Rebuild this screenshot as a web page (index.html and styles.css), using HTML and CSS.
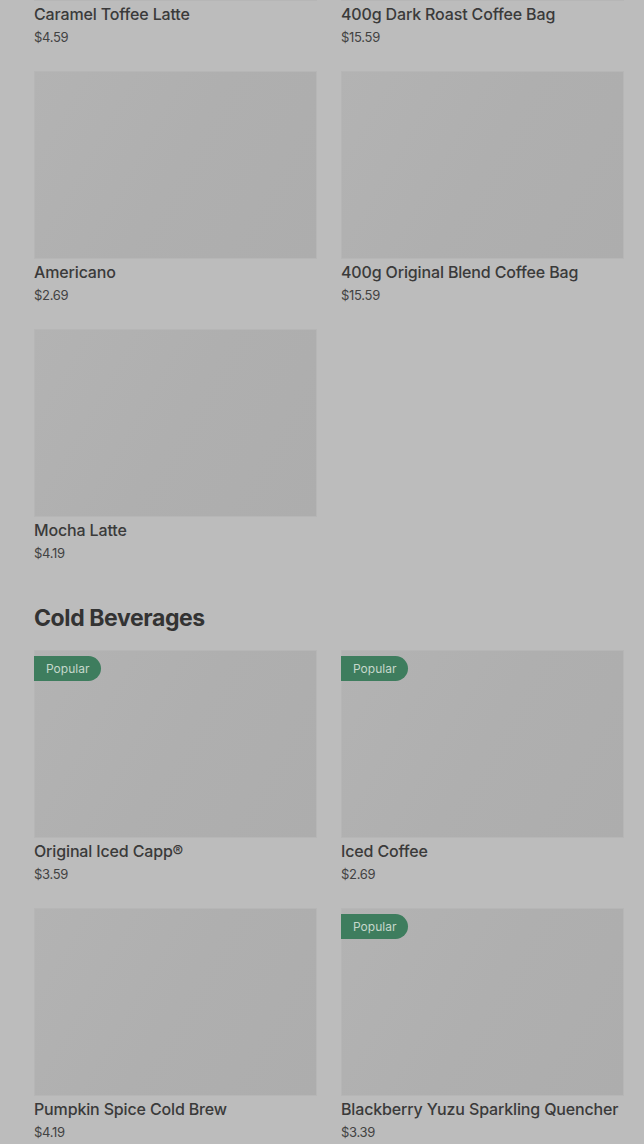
FILE: index.html
```html
<!DOCTYPE html>
<html>
<head>
<meta charset="utf-8">
<link rel="stylesheet" href="styles.css">
</head>
<body>
<div class="page">
  <section class="grid">
    <div class="card"><div class="thumb"></div><div class="name">Caramel Toffee Latte</div><div class="price">$4.59</div></div>
    <div class="card"><div class="thumb"></div><div class="name">400g Dark Roast Coffee Bag</div><div class="price">$15.59</div></div>
    <div class="card"><div class="thumb"></div><div class="name">Americano</div><div class="price">$2.69</div></div>
    <div class="card"><div class="thumb"></div><div class="name">400g Original Blend Coffee Bag</div><div class="price">$15.59</div></div>
    <div class="card"><div class="thumb"></div><div class="name">Mocha Latte</div><div class="price">$4.19</div></div>
  </section>
  <h2 class="heading">Cold Beverages</h2>
  <section class="grid">
    <div class="card"><div class="thumb"><span class="badge">Popular</span></div><div class="name">Original Iced Capp®</div><div class="price">$3.59</div></div>
    <div class="card"><div class="thumb"><span class="badge">Popular</span></div><div class="name">Iced Coffee</div><div class="price">$2.69</div></div>
    <div class="card"><div class="thumb"></div><div class="name">Pumpkin Spice Cold Brew</div><div class="price">$4.19</div></div>
    <div class="card"><div class="thumb"><span class="badge">Popular</span></div><div class="name">Blackberry Yuzu Sparkling Quencher</div><div class="price">$3.39</div></div>
  </section>
</div>
</body>
</html>
```
FILE: styles.css
```css
html, body {
  margin: 0;
  padding: 0;
  background: #bcbcbc;
  overflow: hidden;
}
.page {
  margin-top: -187px;
  padding: 0 20px 0 34px;
  font-family: Inter, "Noto Sans", sans-serif;
}
.grid {
  display: grid;
  grid-template-columns: 283px 283px;
  column-gap: 24px;
  row-gap: 24px;
}
.card {
  display: flex;
  flex-direction: column;
}
.thumb {
  position: relative;
  height: 188px;
  background: linear-gradient(120deg, #b3b3b3 0%, #afafaf 50%, #adadad 100%);
  box-shadow: inset 0 0 0 1px #b6b6b6;
}
.name {
  margin-top: 1px;
  height: 24px;
  line-height: 24px;
  font-size: 16px;
  font-weight: 500;
  color: #3a3a3a;
  white-space: nowrap;
  letter-spacing: -0.15px;
}
.price {
  padding-top: 2px;
  height: 19px;
  line-height: 19px;
  font-size: 13px;
  color: #424242;
  letter-spacing: -0.3px;
}
.heading {
  margin: 39px 0 16px;
  height: 32px;
  line-height: 32px;
  font-size: 23px;
  font-weight: 700;
  color: #333333;
  letter-spacing: -0.4px;
}
.badge {
  position: absolute;
  left: 0;
  top: 6px;
  height: 25px;
  line-height: 25px;
  padding: 0 12px;
  border-radius: 0 13px 13px 0;
  background: #3e7d5e;
  color: #c6d8cc;
  font-size: 12px;
}
```
